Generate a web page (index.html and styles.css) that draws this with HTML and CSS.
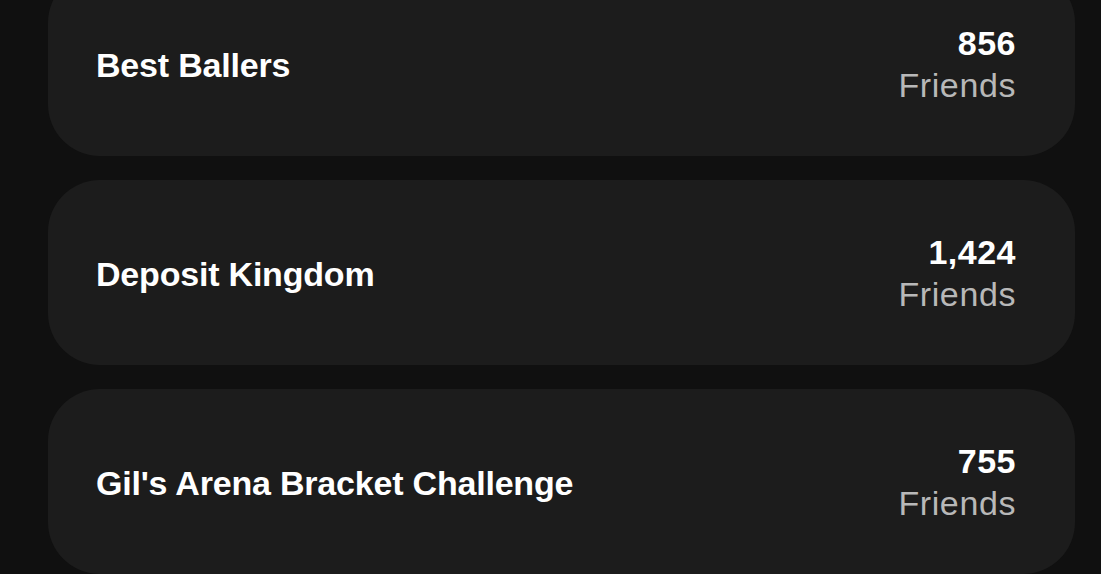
FILE: index.html
```html
<!DOCTYPE html>
<html lang="en">
<head>
<meta charset="utf-8">
<title>Leagues</title>
<link rel="stylesheet" href="styles.css">
</head>
<body>
<main class="list">
  <div class="card">
    <div class="title">Best Ballers</div>
    <div class="stat"><div class="num">856</div><div class="label">Friends</div></div>
  </div>
  <div class="card">
    <div class="title">Deposit Kingdom</div>
    <div class="stat"><div class="num">1,424</div><div class="label">Friends</div></div>
  </div>
  <div class="card">
    <div class="title">Gil's Arena Bracket Challenge</div>
    <div class="stat"><div class="num">755</div><div class="label">Friends</div></div>
  </div>
</main>
</body>
</html>
```
FILE: styles.css
```css
html, body {
  margin: 0;
  background: #101010;
  height: 100%;
  overflow: hidden;
}
body {
  font-family: "Liberation Sans", Arial, sans-serif;
  color: #fff;
}
.list {
  display: flex;
  flex-direction: column;
  gap: 24px;
  margin-top: -29px;
  padding: 0 26px 0 48px;
}
.card {
  height: 185px;
  background: #1c1c1c;
  border-radius: 52px;
  display: flex;
  align-items: center;
  justify-content: space-between;
  padding: 0 59px 0 48px;
}
.title {
  font-size: 34px;
  font-weight: 700;
  line-height: 42px;
  letter-spacing: -0.2px;
  padding-top: 2px;
}
.stat {
  text-align: right;
  font-size: 34px;
  line-height: 42px;
}
.num {
  font-weight: 700;
  letter-spacing: 0.5px;
}
.label {
  color: #b8b8b8;
  letter-spacing: 0.6px;
}
```
